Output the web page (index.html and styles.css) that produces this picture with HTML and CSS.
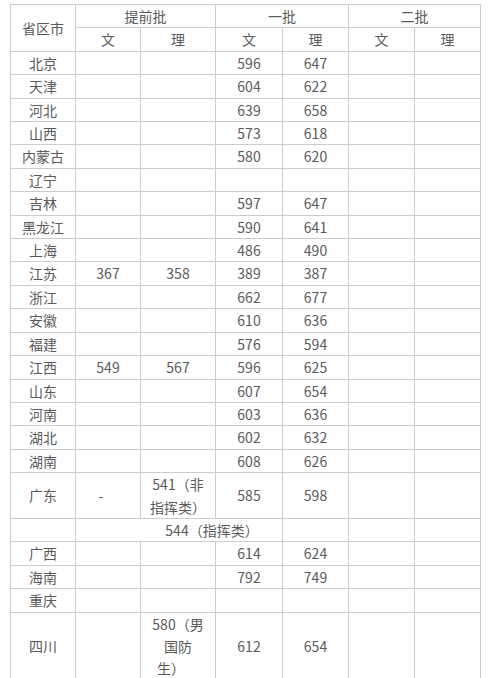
FILE: index.html
```html
<!DOCTYPE html>
<html lang="zh-CN">
<head>
<meta charset="utf-8">
<title>分数线</title>
<link rel="stylesheet" href="styles.css">
</head>
<body>
<table class="score">
<colgroup>
<col class="c1"><col class="c2"><col class="c3"><col class="c4"><col class="c5"><col class="c6"><col class="c7">
</colgroup>
<tbody>
<tr><td rowspan="2">省区市</td><td colspan="2">提前批</td><td colspan="2">一批</td><td colspan="2">二批</td></tr>
<tr><td>文</td><td>理</td><td>文</td><td>理</td><td>文</td><td>理</td></tr>
<tr><td>北京</td><td></td><td></td><td>596</td><td>647</td><td></td><td></td></tr>
<tr><td>天津</td><td></td><td></td><td>604</td><td>622</td><td></td><td></td></tr>
<tr><td>河北</td><td></td><td></td><td>639</td><td>658</td><td></td><td></td></tr>
<tr><td>山西</td><td></td><td></td><td>573</td><td>618</td><td></td><td></td></tr>
<tr><td>内蒙古</td><td></td><td></td><td>580</td><td>620</td><td></td><td></td></tr>
<tr><td>辽宁</td><td></td><td></td><td></td><td></td><td></td><td></td></tr>
<tr><td>吉林</td><td></td><td></td><td>597</td><td>647</td><td></td><td></td></tr>
<tr><td>黑龙江</td><td></td><td></td><td>590</td><td>641</td><td></td><td></td></tr>
<tr><td>上海</td><td></td><td></td><td>486</td><td>490</td><td></td><td></td></tr>
<tr><td>江苏</td><td>367</td><td>358</td><td>389</td><td>387</td><td></td><td></td></tr>
<tr><td>浙江</td><td></td><td></td><td>662</td><td>677</td><td></td><td></td></tr>
<tr><td>安徽</td><td></td><td></td><td>610</td><td>636</td><td></td><td></td></tr>
<tr><td>福建</td><td></td><td></td><td>576</td><td>594</td><td></td><td></td></tr>
<tr><td>江西</td><td>549</td><td>567</td><td>596</td><td>625</td><td></td><td></td></tr>
<tr><td>山东</td><td></td><td></td><td>607</td><td>654</td><td></td><td></td></tr>
<tr><td>河南</td><td></td><td></td><td>603</td><td>636</td><td></td><td></td></tr>
<tr><td>湖北</td><td></td><td></td><td>602</td><td>632</td><td></td><td></td></tr>
<tr><td>湖南</td><td></td><td></td><td>608</td><td>626</td><td></td><td></td></tr>
<tr><td>广东</td><td class="dash">-</td><td>541（非<br>指挥类）</td><td>585</td><td>598</td><td></td><td></td></tr>
<tr><td></td><td colspan="3" class="span3">544（指挥类）</td><td></td><td></td><td></td></tr>
<tr><td>广西</td><td></td><td></td><td>614</td><td>624</td><td></td><td></td></tr>
<tr><td>海南</td><td></td><td></td><td>792</td><td>749</td><td></td><td></td></tr>
<tr><td>重庆</td><td></td><td></td><td></td><td></td><td></td><td></td></tr>
<tr><td>四川</td><td></td><td>580（男<br>国防<br><span class="tail">生）</span></td><td>612</td><td>654</td><td></td><td></td></tr>
</tbody>
</table>
</body>
</html>
```
FILE: styles.css
```css
html, body {
  margin: 0;
  padding: 0;
  background: #ffffff;
}
body {
  padding: 4px 0 0 10px;
  font-family: "Noto Sans CJK SC", "Noto Sans", sans-serif;
  font-size: 14px;
  color: #5a5a5a;
}
.score {
  border-collapse: collapse;
  table-layout: fixed;
  width: 471px;
}
.c1 { width: 65px; }
.c2 { width: 65px; }
.c3 { width: 75px; }
.c4 { width: 67px; }
.c5 { width: 66px; }
.c6 { width: 66px; }
.c7 { width: 66px; }
.score td {
  border: 1px solid #cccccc;
  padding: 0 4px;
  line-height: 22.4px;
  height: 22.4px;
  text-align: center;
  vertical-align: middle;
  white-space: nowrap;
}
.score td.span3 {
  padding-left: 70px;
}
.score td.dash {
  padding-right: 18px;
}
.tail {
  margin-right: 14px;
}
```
